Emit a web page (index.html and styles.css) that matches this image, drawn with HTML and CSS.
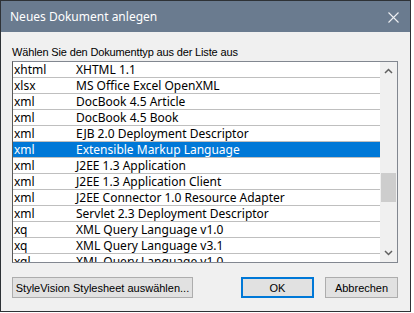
FILE: index.html
```html
<!DOCTYPE html>
<html lang="de">
<head>
    <meta charset="UTF-8">
    <meta name="viewport" content="width=device-width, initial-scale=1.0">
    <title>Neues Dokument anlegen</title>
    <link rel="stylesheet" href="styles.css">
</head>
<body>

    <div class="window">
        <div class="titlebar">
            <span class="title">Neues Dokument anlegen</span>
            <svg class="close-icon" width="11" height="11" viewBox="0 0 11 11">
                <path d="M0.5 0.5 L10.5 10.5 M10.5 0.5 L0.5 10.5" stroke="#eef0f3" stroke-width="1.1" fill="none"/>
            </svg>
        </div>

        <div class="content">
            <div class="prompt">Wählen Sie den Dokumenttyp aus der Liste aus</div>

            <div class="listbox">
                <div class="rows">
                    <div class="row"><span class="ext">xhtml</span><span class="desc">XHTML 1.1</span></div>
                    <div class="row"><span class="ext">xlsx</span><span class="desc">MS Office Excel OpenXML</span></div>
                    <div class="row"><span class="ext">xml</span><span class="desc">DocBook 4.5 Article</span></div>
                    <div class="row"><span class="ext">xml</span><span class="desc">DocBook 4.5 Book</span></div>
                    <div class="row"><span class="ext">xml</span><span class="desc">EJB 2.0 Deployment Descriptor</span></div>
                    <div class="row selected"><span class="ext">xml</span><span class="desc">Extensible Markup Language</span></div>
                    <div class="row"><span class="ext">xml</span><span class="desc">J2EE 1.3 Application</span></div>
                    <div class="row"><span class="ext">xml</span><span class="desc">J2EE 1.3 Application Client</span></div>
                    <div class="row"><span class="ext">xml</span><span class="desc">J2EE Connector 1.0 Resource Adapter</span></div>
                    <div class="row"><span class="ext">xml</span><span class="desc">Servlet 2.3 Deployment Descriptor</span></div>
                    <div class="row"><span class="ext">xq</span><span class="desc">XML Query Language v1.0</span></div>
                    <div class="row"><span class="ext">xq</span><span class="desc">XML Query Language v3.1</span></div>
                    <div class="row"><span class="ext">xql</span><span class="desc">XML Query Language v1.0</span></div>
                </div>

                <div class="scrollbar">
                    <svg class="arrow" width="9" height="6" viewBox="0 0 9 6">
                        <path d="M1 5 L4.5 1.5 L8 5" stroke="#606060" stroke-width="1.5" fill="none"/>
                    </svg>
                    <div class="track">
                        <div class="thumb"></div>
                    </div>
                    <svg class="arrow" width="9" height="6" viewBox="0 0 9 6">
                        <path d="M1 1 L4.5 4.5 L8 1" stroke="#606060" stroke-width="1.5" fill="none"/>
                    </svg>
                </div>
            </div>

            <div class="buttons">
                <button class="btn btn-wide">StyleVision Stylesheet auswählen...</button>
                <div class="spacer"></div>
                <button class="btn btn-default">OK</button>
                <button class="btn">Abbrechen</button>
            </div>
        </div>
    </div>

</body>
</html>
```

FILE: styles.css
```css
body {
    margin: 0;
    padding: 0;
    background-color: #fff;
    font-family: 'Liberation Sans', Arial, sans-serif;
}

.window {
    width: 411px;
    height: 312px;
    box-sizing: border-box;
    border: 1px solid #2e3236;
    background-color: #f0f0f0;
}

.titlebar {
    height: 31px;
    background-color: #6a7b8f;
    display: flex;
    align-items: center;
    justify-content: space-between;
    padding: 0 11px 0 9px;
}

.title {
    font-family: 'Noto Sans', sans-serif;
    font-size: 12px;
    color: #fff;
}

.close-icon {
    display: block;
    margin-top: 1px;
}

.content {
    padding: 12px 12px 0 11px;
}

.prompt {
    font-size: 11px;
    line-height: 16px;
    letter-spacing: -0.15px;
    color: #000;
    margin-bottom: 1px;
}

.listbox {
    height: 202px;
    box-sizing: border-box;
    border: 1px solid #828790;
    border-left-color: #5a5a5a;
    background-color: #fff;
    display: flex;
    overflow: hidden;
}

.rows {
    flex: 1;
    overflow: hidden;
}

.row {
    height: 15px;
    border-bottom: 1px solid #bfbfbf;
    display: flex;
    align-items: center;
    font-family: 'Noto Sans', sans-serif;
    font-size: 12px;
    color: #000;
    white-space: nowrap;
}

.row .ext {
    width: 62px;
    padding-left: 1px;
}

.row.selected {
    background-color: #0078d7;
    color: #fff;
}

.scrollbar {
    width: 17px;
    background-color: #f0f0f0;
    display: flex;
    flex-direction: column;
    align-items: center;
}

.scrollbar .arrow {
    display: block;
    margin: 6px 0;
}

.track {
    flex: 1;
    width: 100%;
    position: relative;
}

.thumb {
    position: absolute;
    left: 1px;
    right: 1px;
    top: 93px;
    height: 29px;
    background-color: #cdcdcd;
}

.buttons {
    display: flex;
    margin-top: 14px;
    gap: 11px;
}

.spacer {
    flex: 1;
}

.btn {
    height: 21px;
    width: 73px;
    box-sizing: border-box;
    background-color: #e1e1e1;
    border: 1px solid #adadad;
    font-family: 'Liberation Sans', Arial, sans-serif;
    font-size: 11px;
    color: #000;
    padding: 0;
    margin: 0;
}

.btn-wide {
    width: 181px;
}

.btn-default {
    border: 2px solid #0078d7;
}
```
